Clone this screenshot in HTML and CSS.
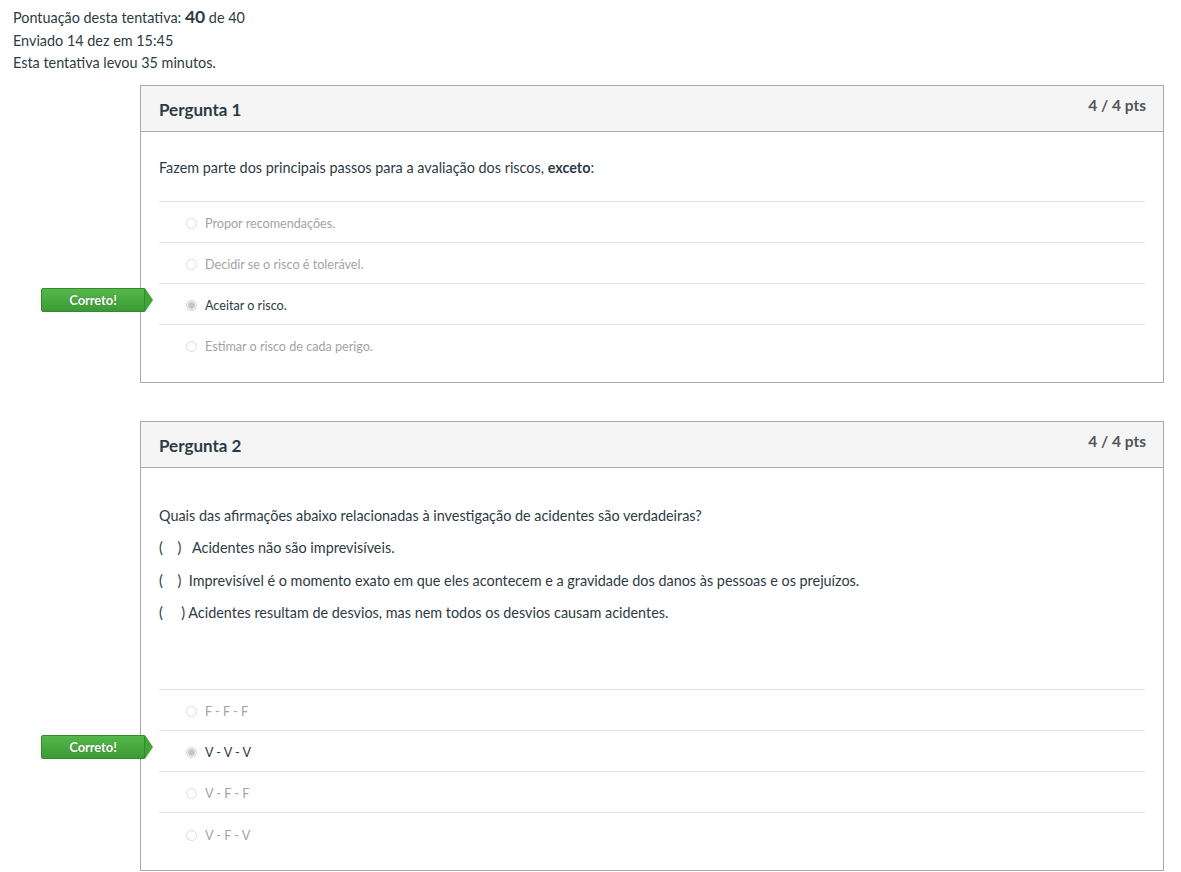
FILE: index.html
```html
<!DOCTYPE html>
<html lang="pt">
<head>
  <meta charset="UTF-8" />
  <title>Resultados do teste</title>
  <link rel="stylesheet" href="styles.css">
</head>
<body>

  <div class="summary">
    <div>Pontuação desta tentativa: <span class="score">40</span> de 40</div>
    <div>Enviado 14 dez em 15:45</div>
    <div>Esta tentativa levou 35 minutos.</div>
  </div>

  <div class="question">
    <div class="q-header">
      <h2>Pergunta 1</h2>
      <span class="pts">4 / 4 pts</span>
    </div>
    <div class="q-body">
      <p class="q-text">Fazem parte dos principais passos para a avaliação dos riscos, <b>exceto</b>:</p>
      <div class="answers">
        <div class="answer"><span class="radio"></span>Propor recomendações.</div>
        <div class="answer"><span class="radio"></span>Decidir se o risco é tolerável.</div>
        <div class="answer selected"><span class="flag">Correto!</span><span class="radio"></span>Aceitar o risco.</div>
        <div class="answer"><span class="radio"></span>Estimar o risco de cada perigo.</div>
      </div>
    </div>
  </div>

  <div class="question">
    <div class="q-header">
      <h2>Pergunta 2</h2>
      <span class="pts">4 / 4 pts</span>
    </div>
    <div class="q-body">
      <div class="q-text long">
        <p>Quais das afirmações abaixo relacionadas à investigação de acidentes são verdadeiras?</p>
        <p>(&nbsp;&nbsp;&nbsp;&nbsp;)&nbsp;&nbsp;&nbsp;Acidentes não são imprevisíveis.</p>
        <p>(&nbsp;&nbsp;&nbsp;&nbsp;)&nbsp;&nbsp;Imprevisível é o momento exato em que eles acontecem e a gravidade dos danos às pessoas e os prejuízos.</p>
        <p>(&nbsp;&nbsp;&nbsp;&nbsp;&nbsp;)&nbsp;Acidentes resultam de desvios, mas nem todos os desvios causam acidentes.</p>
      </div>
      <div class="answers">
        <div class="answer"><span class="radio"></span>F - F - F</div>
        <div class="answer selected"><span class="flag">Correto!</span><span class="radio"></span>V - V - V</div>
        <div class="answer"><span class="radio"></span>V - F - F</div>
        <div class="answer"><span class="radio"></span>V - F - V</div>
      </div>
    </div>
  </div>

</body>
</html>
```

FILE: styles.css
```css
body {
  margin: 0;
  padding: 6px 17px 0 13px;
  font-family: Lato, "Open Sans", sans-serif;
  font-size: 14.4px;
  color: #2d3b45;
  background: #fff;
}

.summary {
  line-height: 22.5px;
}

.summary .score {
  font-size: 17.5px;
  font-weight: bold;
}

.question {
  margin: 10px 0 38px 127px;
  border: 1px solid #aaa;
}

.q-header {
  display: flex;
  justify-content: space-between;
  align-items: flex-start;
  background: #f5f5f5;
  border-bottom: 1px solid #aaa;
  height: 45px;
  padding: 0 17px 0 18px;
}

.q-header h2 {
  margin: 0;
  padding-top: 14px;
  font-size: 17px;
  font-weight: bold;
  line-height: 20px;
}

.pts {
  padding-top: 9px;
  font-size: 15.5px;
  font-weight: bold;
  color: #555;
  line-height: 20px;
}

.q-body {
  padding: 26px 18px 16px;
}

.q-text {
  margin: 0 0 23px;
  line-height: 20px;
}

.q-text.long {
  margin: 12px 0 66px;
}

.q-text.long p {
  margin: 0 0 12.5px;
}

.answers {
  border-top: 1px solid #e3e3e3;
}

.answer {
  position: relative;
  display: flex;
  align-items: center;
  height: 37px;
  padding: 3px 0 0 27px;
  border-bottom: 1px solid #e3e3e3;
  color: #a0a4a8;
  font-size: 12.6px;
}

.answer:last-child {
  border-bottom: none;
  height: 38px;
}

.answer.selected {
  color: #2d3b45;
}

.radio {
  width: 9px;
  height: 9px;
  border: 1px solid #ddd;
  border-radius: 50%;
  margin-right: 8px;
  background: #fff;
}

.selected .radio {
  background: radial-gradient(circle, #c4c4c4 0 3px, #f2f2f2 3.5px);
  border-color: #d4d4d4;
}

.flag {
  position: absolute;
  left: -118px;
  top: 4px;
  width: 104px;
  height: 24px;
  line-height: 22px;
  text-align: center;
  color: #fff;
  font-size: 13px;
  font-weight: bold;
  letter-spacing: -0.1px;
  background: linear-gradient(#55b84a, #3c9a34);
  border: 1px solid #338a2c;
  border-radius: 2px 0 0 2px;
  box-sizing: border-box;
  text-shadow: 0 0 1px #2a6d24;
}

.flag::after {
  content: "";
  position: absolute;
  right: -9px;
  top: -1px;
  border-top: 12px solid transparent;
  border-bottom: 12px solid transparent;
  border-left: 8px solid #44a43b;
}
```
